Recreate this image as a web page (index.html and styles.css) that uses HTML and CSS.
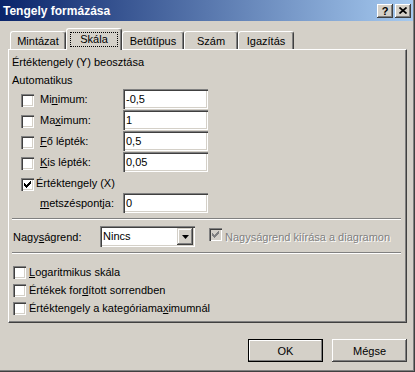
FILE: index.html
```html
<!DOCTYPE html>
<html>
<head>
	<meta charset="utf-8">
	<link rel="stylesheet" href="styles.css">
</head>
<body>
	<div class="window">
		<div class="titlebar">
			<span class="title">Tengely formázása</span>
			<div class="cap-btns">
				<span class="cap-btn">?</span>
				<span class="cap-btn">
					<svg width="8" height="7" viewBox="0 0 8 7"><path d="M0.5 0.5 L7.5 6.5 M7.5 0.5 L0.5 6.5" stroke="#000" stroke-width="1.7"/></svg>
				</span>
			</div>
		</div>

		<div class="main">
			<div class="tabs">
				<div class="tab" style="width:56px">Mintázat</div>
				<div class="tab active" style="width:56px"><span class="focus">Skála</span></div>
				<div class="tab" style="width:62px">Betűtípus</div>
				<div class="tab" style="width:54px">Szám</div>
				<div class="tab" style="width:56px">Igazítás</div>
			</div>

			<div class="panel">
				<div class="heading">Értéktengely (Y) beosztása</div>
				<div class="subheading">Automatikus</div>

				<div class="scale">
					<span class="check"></span>
					<label class="lbl">Mi<u>n</u>imum:</label>
					<input class="field" type="text" value="-0,5">

					<span class="check"></span>
					<label class="lbl">Ma<u>x</u>imum:</label>
					<input class="field" type="text" value="1">

					<span class="check"></span>
					<label class="lbl"><u>F</u>ő lépték:</label>
					<input class="field" type="text" value="0,5">

					<span class="check"></span>
					<label class="lbl"><u>K</u>is lépték:</label>
					<input class="field" type="text" value="0,05">

					<span class="check">
						<svg width="13" height="13" viewBox="0 0 13 13"><path d="M3 5h1v3h-1z M4 6h1v3h-1z M5 7h1v3h-1z M6 6h1v3h-1z M7 5h1v3h-1z M8 4h1v3h-1z M9 3h1v3h-1z" fill="#000"/></svg>
					</span>
					<label class="lbl wide">Értéktengely (X)</label>

					<span></span>
					<label class="lbl"><u>m</u>etszéspontja:</label>
					<input class="field" type="text" value="0">
				</div>

				<div class="sep"></div>

				<div class="units">
					<label class="units-lbl">Nagy<u>s</u>ágrend:</label>
					<div class="combo">
						<span class="combo-text">Nincs</span>
						<span class="combo-btn">
							<svg width="7" height="4" viewBox="0 0 7 4"><path d="M0 0h7L3.5 4z" fill="#000"/></svg>
						</span>
					</div>
					<span class="check disabled">
						<svg width="13" height="13" viewBox="0 0 13 13"><path d="M3 5h1v3h-1z M4 6h1v3h-1z M5 7h1v3h-1z M6 6h1v3h-1z M7 5h1v3h-1z M8 4h1v3h-1z M9 3h1v3h-1z" fill="#808080"/></svg>
					</span>
					<label class="muted">Nagyságrend kiírása a diagramon</label>
				</div>

				<div class="sep"></div>

				<div class="options">
					<div class="opt"><span class="check"></span><label><u>L</u>ogaritmikus skála</label></div>
					<div class="opt"><span class="check"></span><label>Értékek for<u>d</u>ított sorrendben</label></div>
					<div class="opt"><span class="check"></span><label>Értéktengely a kategóriama<u>x</u>imumnál</label></div>
				</div>
			</div>

			<div class="actions">
				<button class="btn default">OK</button>
				<button class="btn">Mégse</button>
			</div>
		</div>
	</div>
</body>
</html>
```

FILE: styles.css
```css
body {
	margin:0;
	font-family:"Liberation Sans", Arial, sans-serif;
	font-size:11px;
	color:#000;
	background:#D4D0C8;
}
.window {
	width:415px;
	height:372px;
	box-sizing:border-box;
	padding-right:2px;
	padding-bottom:2px;
	background:#D4D0C8;
	box-shadow:inset -1px -1px #404040, inset -2px -2px #808080;
}

/* caption */
.titlebar {
	height:21px;
	display:flex;
	align-items:center;
	justify-content:space-between;
	padding:0 2px 0 3px;
	background:linear-gradient(to right,#0A246A,#A6CAF0);
}
.title {
	color:#fff;
	font-weight:bold;
	font-size:12px;
}
.cap-btns {
	display:flex;
	gap:2px;
}
.cap-btn {
	width:16px;
	height:14px;
	display:flex;
	align-items:center;
	justify-content:center;
	background:#D4D0C8;
	font-weight:bold;
	font-size:11px;
	box-shadow:inset -1px -1px #404040, inset 1px 1px #fff, inset -2px -2px #808080;
}

/* tabs */
.main {
	padding:7px 6px 0 8px;
}
.tabs {
	display:flex;
	align-items:flex-end;
	margin-left:2px;
}
.tab {
	height:18px;
	box-sizing:border-box;
	padding-top:1px;
	line-height:16px;
	text-align:center;
	background:#D4D0C8;
	border-top:1px solid #fff;
	border-left:1px solid #fff;
	border-right:1px solid #404040;
	border-radius:3px 3px 0 0;
	box-shadow:inset -1px 0 #808080;
}
.tab.active {
	position:relative;
	z-index:1;
	height:22px;
	margin-bottom:-1px;
	padding:3px 3px 0;
	line-height:13px;
}
.focus {
	display:block;
	height:15px;
	box-sizing:border-box;
	border:1px dotted #000;
}

/* panel */
.panel {
	height:274px;
	box-sizing:border-box;
	padding-top:6px;
	border-top:1px solid #fff;
	border-left:1px solid #fff;
	border-right:1px solid #404040;
	border-bottom:1px solid #404040;
	box-shadow:inset -1px -1px #808080;
}
.heading {
	line-height:13px;
	padding-left:3px;
}
.subheading {
	line-height:13px;
	padding-left:3px;
	margin-top:5px;
}
.scale {
	display:grid;
	grid-template-columns:15px 87px 85px;
	grid-template-rows:repeat(4,21px) 20px 20px;
	align-items:start;
	margin-top:2px;
	padding-left:12px;
}
.scale .check {
	margin-top:5px;
}
.lbl {
	line-height:20px;
	padding-left:4px;
}
.lbl.wide {
	grid-column:2 / 4;
	padding-left:0;
}

.check {
	width:13px;
	height:13px;
	flex:none;
	background:#fff;
	box-shadow:inset 1px 1px #808080, inset 2px 2px #404040, inset -1px -1px #fff, inset -2px -2px #D4D0C8;
}
.check svg {
	display:block;
}
.check.disabled {
	background:#D4D0C8;
}

.field {
	width:85px;
	height:20px;
	box-sizing:border-box;
	margin:0;
	border:0;
	padding:0 0 0 3px;
	font:inherit;
	color:#000;
	background:#fff;
	outline:none;
	box-shadow:inset 1px 1px #808080, inset 2px 2px #404040, inset -1px -1px #fff, inset -2px -2px #D4D0C8;
}

.sep {
	height:2px;
	box-sizing:border-box;
	margin:5px 5px 0 3px;
	border-top:1px solid #808080;
	border-bottom:1px solid #fff;
}

.units {
	display:flex;
	align-items:center;
	height:21px;
	margin-top:6px;
	margin-bottom:4px;
	padding-left:4px;
}
.units-lbl {
	width:87px;
}
.combo {
	width:95px;
	height:21px;
	box-sizing:border-box;
	display:flex;
	align-items:stretch;
	padding:2px;
	background:#fff;
	box-shadow:inset 1px 1px #808080, inset 2px 2px #404040, inset -1px -1px #fff, inset -2px -2px #D4D0C8;
}
.combo-text {
	flex:1;
	padding-left:1px;
	line-height:17px;
}
.combo-btn {
	width:16px;
	display:flex;
	align-items:center;
	justify-content:center;
	background:#D4D0C8;
	box-shadow:inset -1px -1px #404040, inset 1px 1px #D4D0C8, inset -2px -2px #808080, inset 2px 2px #fff;
}
.units .check {
	margin-left:14px;
	align-self:flex-start;
	margin-top:2px;
}
.muted {
	margin-left:3px;
	color:#808080;
	text-shadow:1px 1px #fff;
}

.options {
	margin-top:9px;
	padding-left:4px;
}
.opt {
	display:flex;
	align-items:center;
	height:18px;
}
.opt label {
	margin-left:3px;
}

/* buttons */
.actions {
	display:flex;
	justify-content:flex-end;
	gap:9px;
	margin-top:16px;
}
.btn {
	width:75px;
	height:23px;
	margin:0;
	padding:0;
	border:0;
	font:inherit;
	color:#000;
	background:#D4D0C8;
	box-shadow:inset -1px -1px #404040, inset 1px 1px #fff, inset -2px -2px #808080;
}
.btn.default {
	border:1px solid #000;
	box-shadow:inset -1px -1px #808080, inset 1px 1px #fff;
}
```
